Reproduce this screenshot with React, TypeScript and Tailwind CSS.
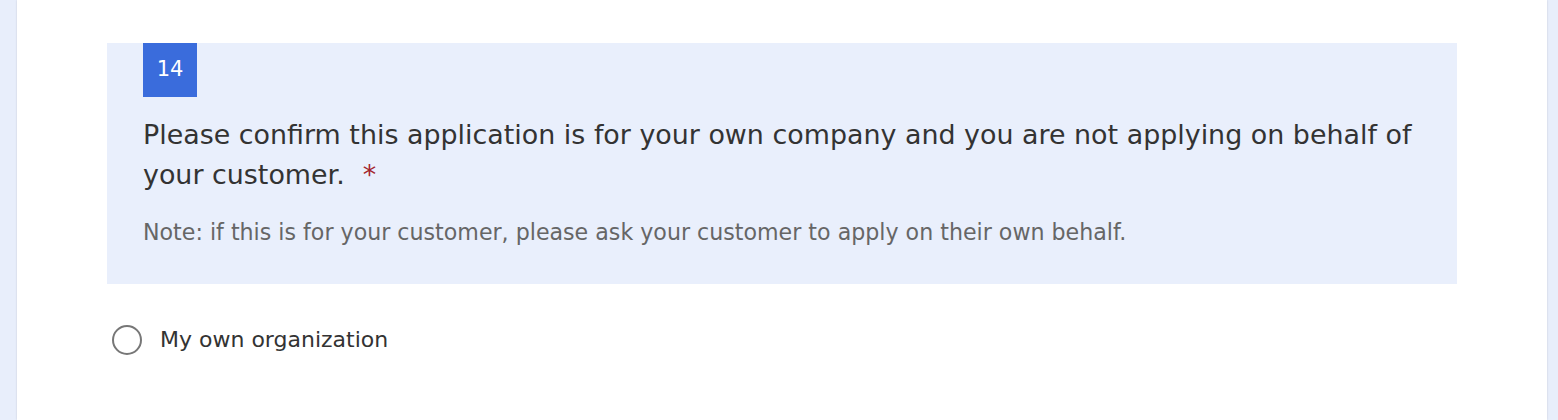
import React from 'react';

const font = { fontFamily: '"DejaVu Sans", sans-serif' };

const App = () => {
  return (
    <div className="h-[420px] w-full bg-[#e8eefb] pl-[17px] pr-[11px] overflow-hidden" style={font}>
      <div className="h-full bg-white shadow-[0_0_2px_rgba(0,0,0,0.15)] px-[90px] pt-[43px]">
        <div className="bg-[#e9effc] pl-[36px] pr-[28px] pb-[38px]">
          <div className="w-[54px] h-[54px] bg-[#3a6cdc] text-white text-[21px] flex items-center justify-center">14</div>
          <div className="mt-[18px] text-[26.9px] leading-[40px] text-[#333333]">
            Please confirm this application is for your own company and you are not applying on behalf of your customer.
            <span className="inline-block text-[#a4262c] ml-[18px]">*</span>
          </div>
          <div className="mt-[23px] text-[22.15px] leading-[28px] text-[#666666]">
            Note: if this is for your customer, please ask your customer to apply on their own behalf.
          </div>
        </div>
        <label className="flex items-center mt-[39px] ml-[5px] gap-[18px] cursor-pointer">
          <span className="w-[30px] h-[30px] rounded-full border-2 border-[#777777] bg-white" />
          <span className="text-[22px] text-[#333333]">My own organization</span>
        </label>
      </div>
    </div>
  );
};

export default App;
